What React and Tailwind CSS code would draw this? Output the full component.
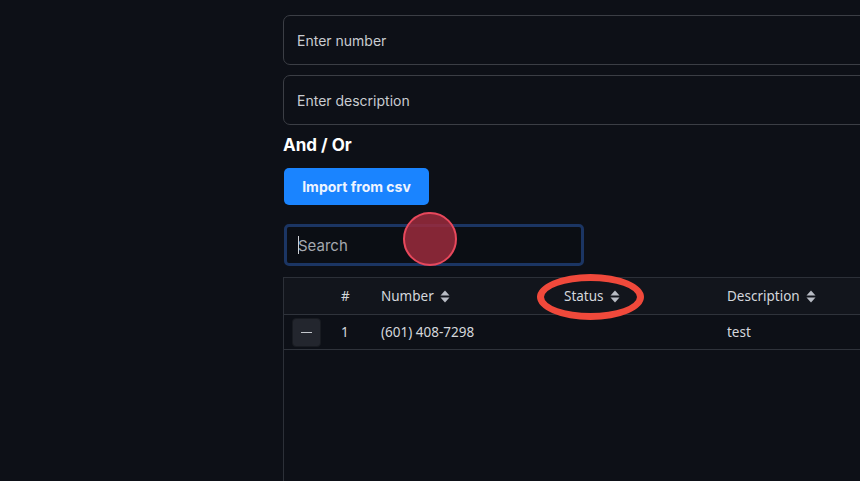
import { useState } from "react";

const SortIcon = () => (
  <svg width="10" height="13" viewBox="0 0 10 13" className="inline-block ml-[6px] -mt-[2px]">
    <path d="M5 0.5 L9.5 5.5 H0.5 Z" fill="#b8bcc4" />
    <path d="M5 12.5 L9.5 7.5 H0.5 Z" fill="#b8bcc4" />
  </svg>
);

const rows = [{ id: 1, number: "(601) 408-7298", status: "", description: "test" }];

export default function App() {
  const [search, setSearch] = useState("");

  return (
    <div className="w-[860px] h-[481px] overflow-hidden bg-[#0d1017] flex">
      <div className="w-[283px] shrink-0" />
      <div className="w-[700px] shrink-0 pt-[15px] font-['Inter',sans-serif]">
        <div className="flex flex-col gap-[10px]">
          <input
            placeholder="Enter number"
            className="h-[50px] w-full rounded-[7px] border border-[#3b3e45] bg-[#0d1017] px-[13px] text-[14px] text-[#d6d8dc] placeholder-[#c9ccd1] outline-none"
          />
          <input
            placeholder="Enter description"
            className="h-[50px] w-full rounded-[7px] border border-[#3b3e45] bg-[#0d1017] px-[13px] text-[14px] text-[#d6d8dc] placeholder-[#c9ccd1] outline-none"
          />
        </div>
        <div className="mt-[9px] text-[17px] font-bold text-white leading-[22px]">And / Or</div>
        <button className="mt-[12px] ml-px h-[37px] w-[145px] rounded-[5px] bg-[#1a84ff] text-[14px] font-bold text-[#eef4ff]">
          Import from csv
        </button>
        <div className="relative mt-[19px] ml-px w-[300px]">
          <input
            value={search}
            onChange={(e) => setSearch(e.target.value)}
            placeholder="Search"
            className="h-[42px] w-full rounded-[5px] border-[3px] border-[#1b3563] bg-[#0b0e14] px-[11px] text-[15px] text-[#d6d8dc] placeholder-[#a4a8af] outline-none"
          />
          <div className="absolute left-[14px] top-[12px] h-[18px] w-px bg-[#d0d3d8]" />
          <div className="pointer-events-none absolute left-[119px] top-[-12px] h-[54px] w-[54px] rounded-full border-2 border-[#e8485c] bg-[#9b2a3c]/85" />
        </div>
        <div className="relative mt-[11px] border-l border-t border-[#2c3038] font-['Noto_Sans',sans-serif] text-[13.5px] text-[#d4d7dc]">
          <div className="flex h-[37px] items-center border-b border-[#2f333b] bg-[#12151c]">
            <div className="w-[46px]" />
            <div className="w-[51px] pl-[11px]">#</div>
            <div className="w-[183px]">Number<SortIcon /></div>
            <div className="w-[163px]">Status<SortIcon /></div>
            <div>Description<SortIcon /></div>
          </div>
          {rows.map((r) => (
            <div key={r.id} className="flex h-[35px] items-center border-b border-[#2f333b]">
              <div className="w-[46px] pl-[8px]">
                <button className="flex h-[29px] w-[29px] items-center justify-center rounded-[4px] border border-[#181b21] bg-[#23262e]">
                  <span className="block h-px w-[11px] bg-[#c4c7cc]" />
                </button>
              </div>
              <div className="w-[51px] pl-[11px]">{r.id}</div>
              <div className="w-[183px]">{r.number}</div>
              <div className="w-[163px]">{r.status}</div>
              <div>{r.description}</div>
            </div>
          ))}
          <div className="h-[140px]" />
          <div className="pointer-events-none absolute left-[253px] top-[-4px] h-[46px] w-[107px] rounded-[50%] border-[7px] border-[#f0493b]" />
        </div>
      </div>
    </div>
  );
}
